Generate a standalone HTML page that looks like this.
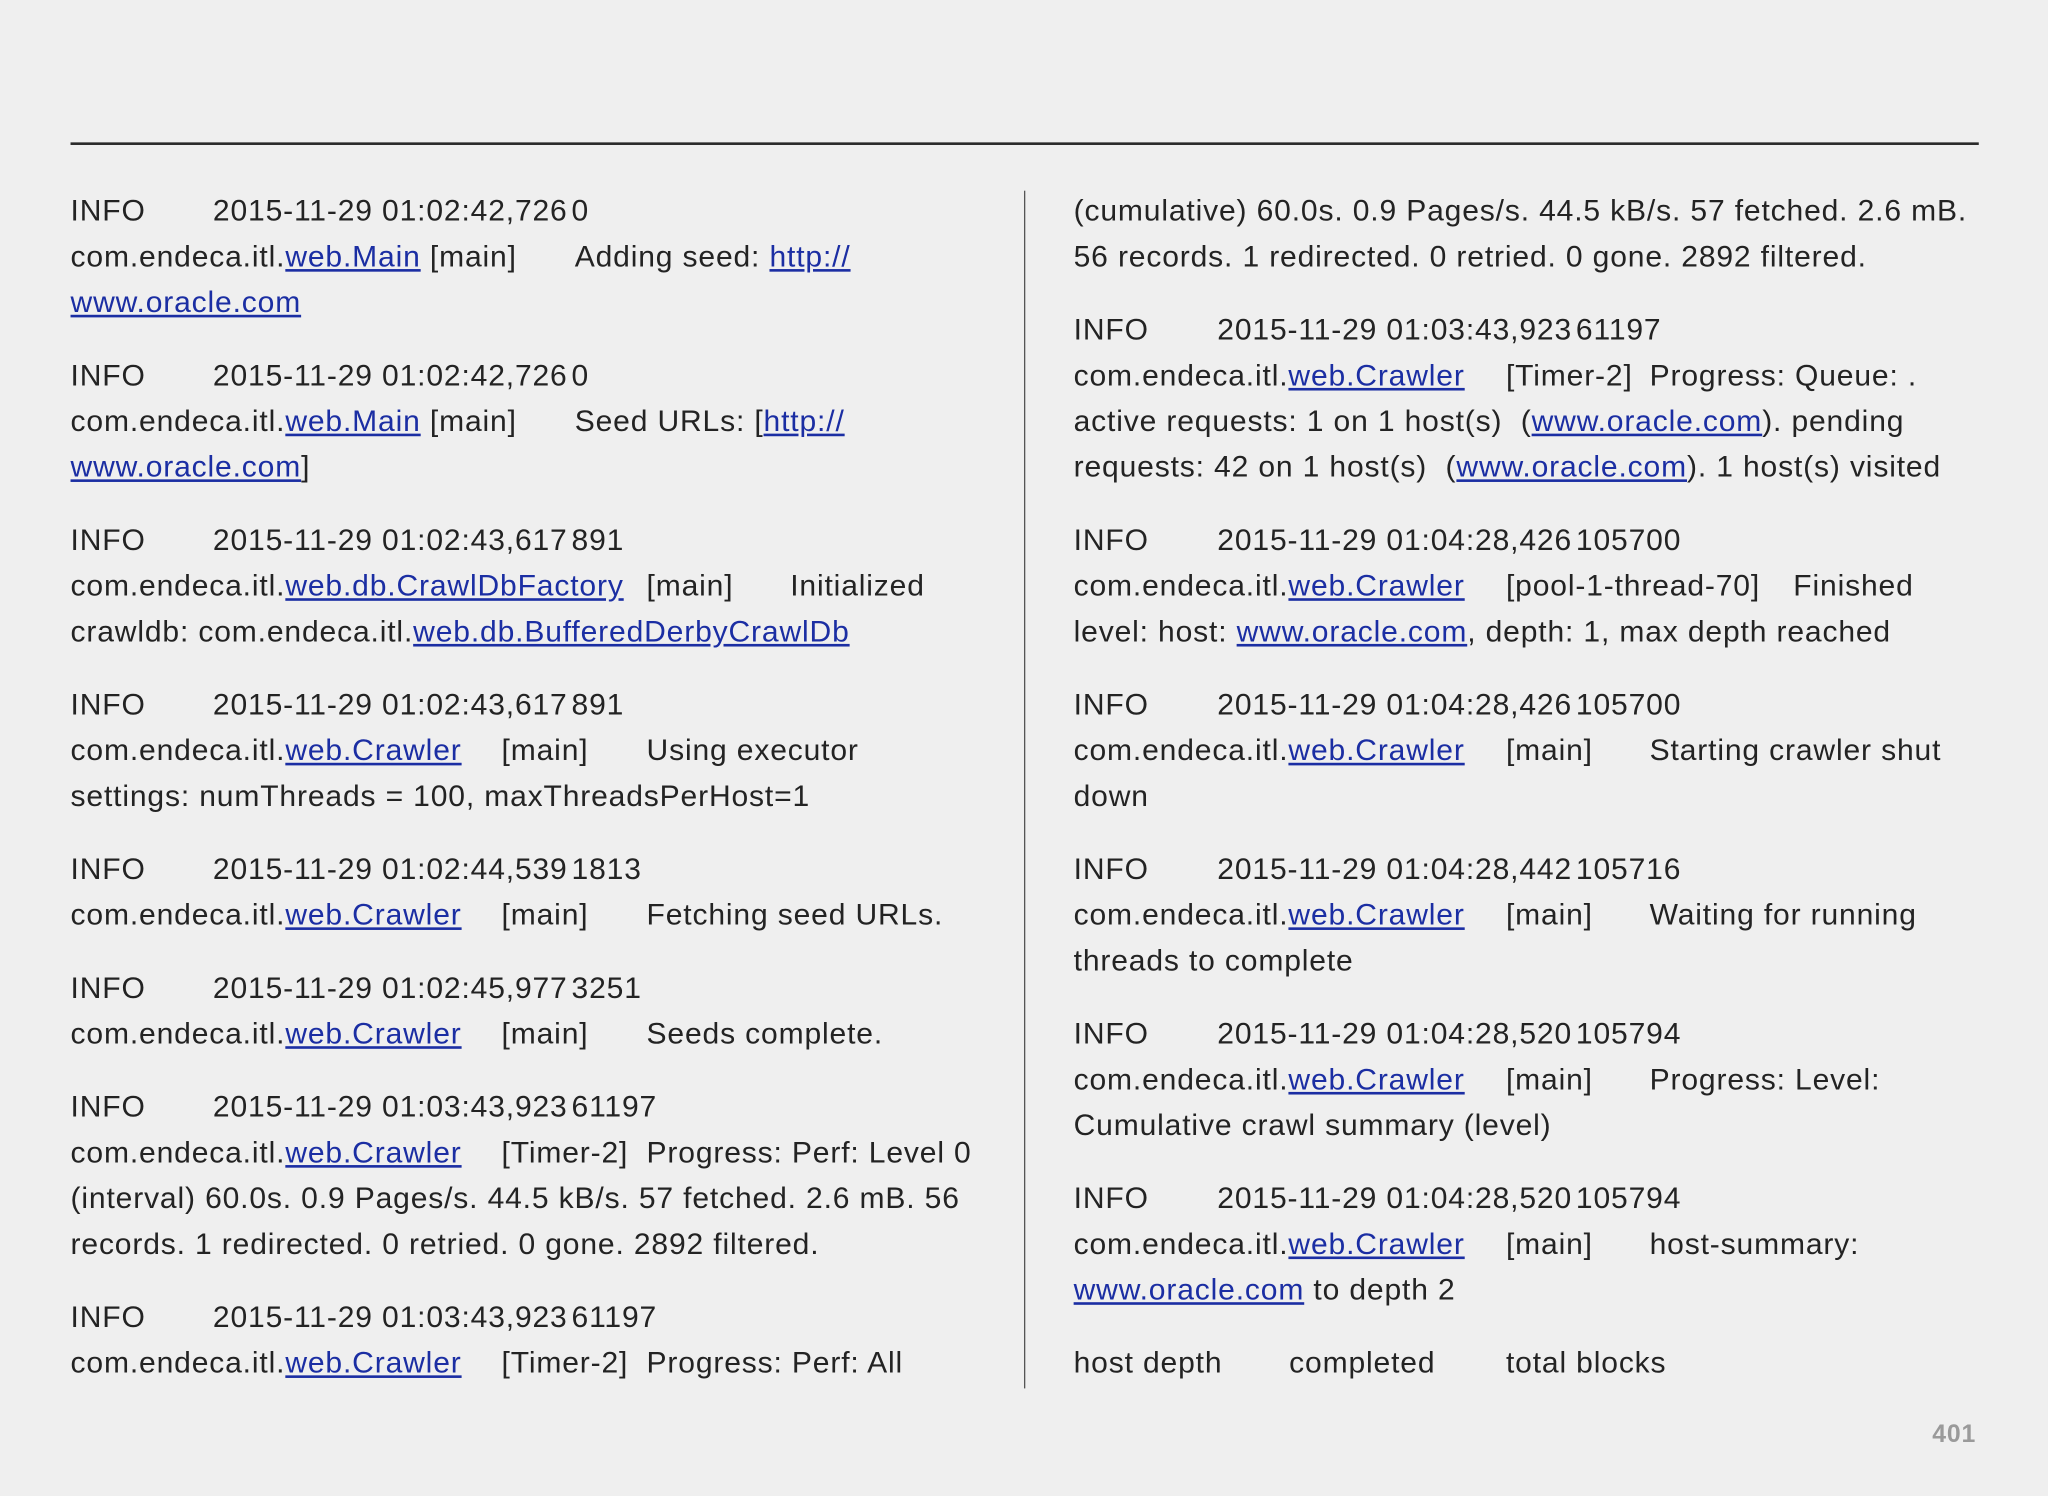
<!DOCTYPE html>
<html><head><meta charset="utf-8"><style>
html,body{margin:0;padding:0}
body{width:2048px;height:1496px;overflow:hidden;background:#efefef}
#s{position:absolute;left:0;top:0;width:1568px;height:1145px;transform:scale(1.30612);transform-origin:0 0;font-family:"Liberation Sans",Arial,sans-serif;font-size:23px;letter-spacing:0.65px;color:#232323}
.l{position:absolute;height:35px;line-height:35px;white-space:nowrap;margin-top:1.5px}
.l span{position:absolute;top:0;white-space:nowrap}
a{color:#1b2ea3;text-decoration:underline}
.n{margin-left:3px}
</style></head><body><div id="s">
<div style="position:absolute;left:54px;top:109px;width:1461px;height:1.5px;background:#2a2a2a"></div>
<div style="position:absolute;left:784px;top:146px;width:1px;height:917px;background:#555"></div>

<div class="l" style="top:142px"><span style="left:54px">INFO</span><span style="left:163px">2015-11-29 01:02:42,726<span class="n">0</span></span></div>
<div class="l" style="top:177px"><span style="left:54px">com.endeca.itl.<a>web.Main</a> [main]</span><span style="left:440px">Adding seed: <a>http://</a></span></div>
<div class="l" style="top:212px"><span style="left:54px"><a>www.oracle.com</a></span></div>

<div class="l" style="top:268px"><span style="left:54px">INFO</span><span style="left:163px">2015-11-29 01:02:42,726<span class="n">0</span></span></div>
<div class="l" style="top:303px"><span style="left:54px">com.endeca.itl.<a>web.Main</a> [main]</span><span style="left:440px">Seed URLs: [<a>http://</a></span></div>
<div class="l" style="top:338px"><span style="left:54px"><a>www.oracle.com</a>]</span></div>

<div class="l" style="top:394px"><span style="left:54px">INFO</span><span style="left:163px">2015-11-29 01:02:43,617<span class="n">891</span></span></div>
<div class="l" style="top:429px"><span style="left:54px">com.endeca.itl.<a>web.db.CrawlDbFactory</a></span><span style="left:495px">[main]</span><span style="left:605px">Initialized</span></div>
<div class="l" style="top:464px"><span style="left:54px">crawldb: com.endeca.itl.<a>web.db.BufferedDerbyCrawlDb</a></span></div>

<div class="l" style="top:520px"><span style="left:54px">INFO</span><span style="left:163px">2015-11-29 01:02:43,617<span class="n">891</span></span></div>
<div class="l" style="top:555px"><span style="left:54px">com.endeca.itl.<a>web.Crawler</a></span><span style="left:384px">[main]</span><span style="left:495px">Using executor</span></div>
<div class="l" style="top:590px"><span style="left:54px">settings: numThreads = 100, maxThreadsPerHost=1</span></div>

<div class="l" style="top:646px"><span style="left:54px">INFO</span><span style="left:163px">2015-11-29 01:02:44,539<span class="n">1813</span></span></div>
<div class="l" style="top:681px"><span style="left:54px">com.endeca.itl.<a>web.Crawler</a></span><span style="left:384px">[main]</span><span style="left:495px">Fetching seed URLs.</span></div>

<div class="l" style="top:737px"><span style="left:54px">INFO</span><span style="left:163px">2015-11-29 01:02:45,977<span class="n">3251</span></span></div>
<div class="l" style="top:772px"><span style="left:54px">com.endeca.itl.<a>web.Crawler</a></span><span style="left:384px">[main]</span><span style="left:495px">Seeds complete.</span></div>

<div class="l" style="top:828px"><span style="left:54px">INFO</span><span style="left:163px">2015-11-29 01:03:43,923<span class="n">61197</span></span></div>
<div class="l" style="top:863px"><span style="left:54px">com.endeca.itl.<a>web.Crawler</a></span><span style="left:384px">[Timer-2]</span><span style="left:495px">Progress: Perf: Level 0</span></div>
<div class="l" style="top:898px"><span style="left:54px">(interval) 60.0s. 0.9 Pages/s. 44.5 kB/s. 57 fetched. 2.6 mB. 56</span></div>
<div class="l" style="top:933px"><span style="left:54px">records. 1 redirected. 0 retried. 0 gone. 2892 filtered.</span></div>

<div class="l" style="top:989px"><span style="left:54px">INFO</span><span style="left:163px">2015-11-29 01:03:43,923<span class="n">61197</span></span></div>
<div class="l" style="top:1024px"><span style="left:54px">com.endeca.itl.<a>web.Crawler</a></span><span style="left:384px">[Timer-2]</span><span style="left:495px">Progress: Perf: All</span></div>

<div class="l" style="top:142px"><span style="left:822px">(cumulative) 60.0s. 0.9 Pages/s. 44.5 kB/s. 57 fetched. 2.6 mB.</span></div>
<div class="l" style="top:177px"><span style="left:822px">56 records. 1 redirected. 0 retried. 0 gone. 2892 filtered.</span></div>

<div class="l" style="top:233px"><span style="left:822px">INFO</span><span style="left:932px">2015-11-29 01:03:43,923<span class="n">61197</span></span></div>
<div class="l" style="top:268px"><span style="left:822px">com.endeca.itl.<a>web.Crawler</a></span><span style="left:1153px">[Timer-2]</span><span style="left:1263px">Progress: Queue: .</span></div>
<div class="l" style="top:303px"><span style="left:822px">active requests: 1 on 1 host(s)&nbsp; (<a>www.oracle.com</a>). pending</span></div>
<div class="l" style="top:338px"><span style="left:822px">requests: 42 on 1 host(s)&nbsp; (<a>www.oracle.com</a>). 1 host(s) visited</span></div>

<div class="l" style="top:394px"><span style="left:822px">INFO</span><span style="left:932px">2015-11-29 01:04:28,426<span class="n">105700</span></span></div>
<div class="l" style="top:429px"><span style="left:822px">com.endeca.itl.<a>web.Crawler</a></span><span style="left:1153px">[pool-1-thread-70]</span><span style="left:1373px">Finished</span></div>
<div class="l" style="top:464px"><span style="left:822px">level: host: <a>www.oracle.com</a>, depth: 1, max depth reached</span></div>

<div class="l" style="top:520px"><span style="left:822px">INFO</span><span style="left:932px">2015-11-29 01:04:28,426<span class="n">105700</span></span></div>
<div class="l" style="top:555px"><span style="left:822px">com.endeca.itl.<a>web.Crawler</a></span><span style="left:1153px">[main]</span><span style="left:1263px">Starting crawler shut</span></div>
<div class="l" style="top:590px"><span style="left:822px">down</span></div>

<div class="l" style="top:646px"><span style="left:822px">INFO</span><span style="left:932px">2015-11-29 01:04:28,442<span class="n">105716</span></span></div>
<div class="l" style="top:681px"><span style="left:822px">com.endeca.itl.<a>web.Crawler</a></span><span style="left:1153px">[main]</span><span style="left:1263px">Waiting for running</span></div>
<div class="l" style="top:716px"><span style="left:822px">threads to complete</span></div>

<div class="l" style="top:772px"><span style="left:822px">INFO</span><span style="left:932px">2015-11-29 01:04:28,520<span class="n">105794</span></span></div>
<div class="l" style="top:807px"><span style="left:822px">com.endeca.itl.<a>web.Crawler</a></span><span style="left:1153px">[main]</span><span style="left:1263px">Progress: Level:</span></div>
<div class="l" style="top:842px"><span style="left:822px">Cumulative crawl summary (level)</span></div>

<div class="l" style="top:898px"><span style="left:822px">INFO</span><span style="left:932px">2015-11-29 01:04:28,520<span class="n">105794</span></span></div>
<div class="l" style="top:933px"><span style="left:822px">com.endeca.itl.<a>web.Crawler</a></span><span style="left:1153px">[main]</span><span style="left:1263px">host-summary:</span></div>
<div class="l" style="top:968px"><span style="left:822px"><a>www.oracle.com</a> to depth 2</span></div>

<div class="l" style="top:1024px"><span style="left:822px">host depth</span><span style="left:987px">completed</span><span style="left:1153px">total blocks</span></div>

<div style="position:absolute;right:55px;top:1088px;font-size:19px;font-weight:bold;color:#9a9a9a">401</div>
</div></body></html>
